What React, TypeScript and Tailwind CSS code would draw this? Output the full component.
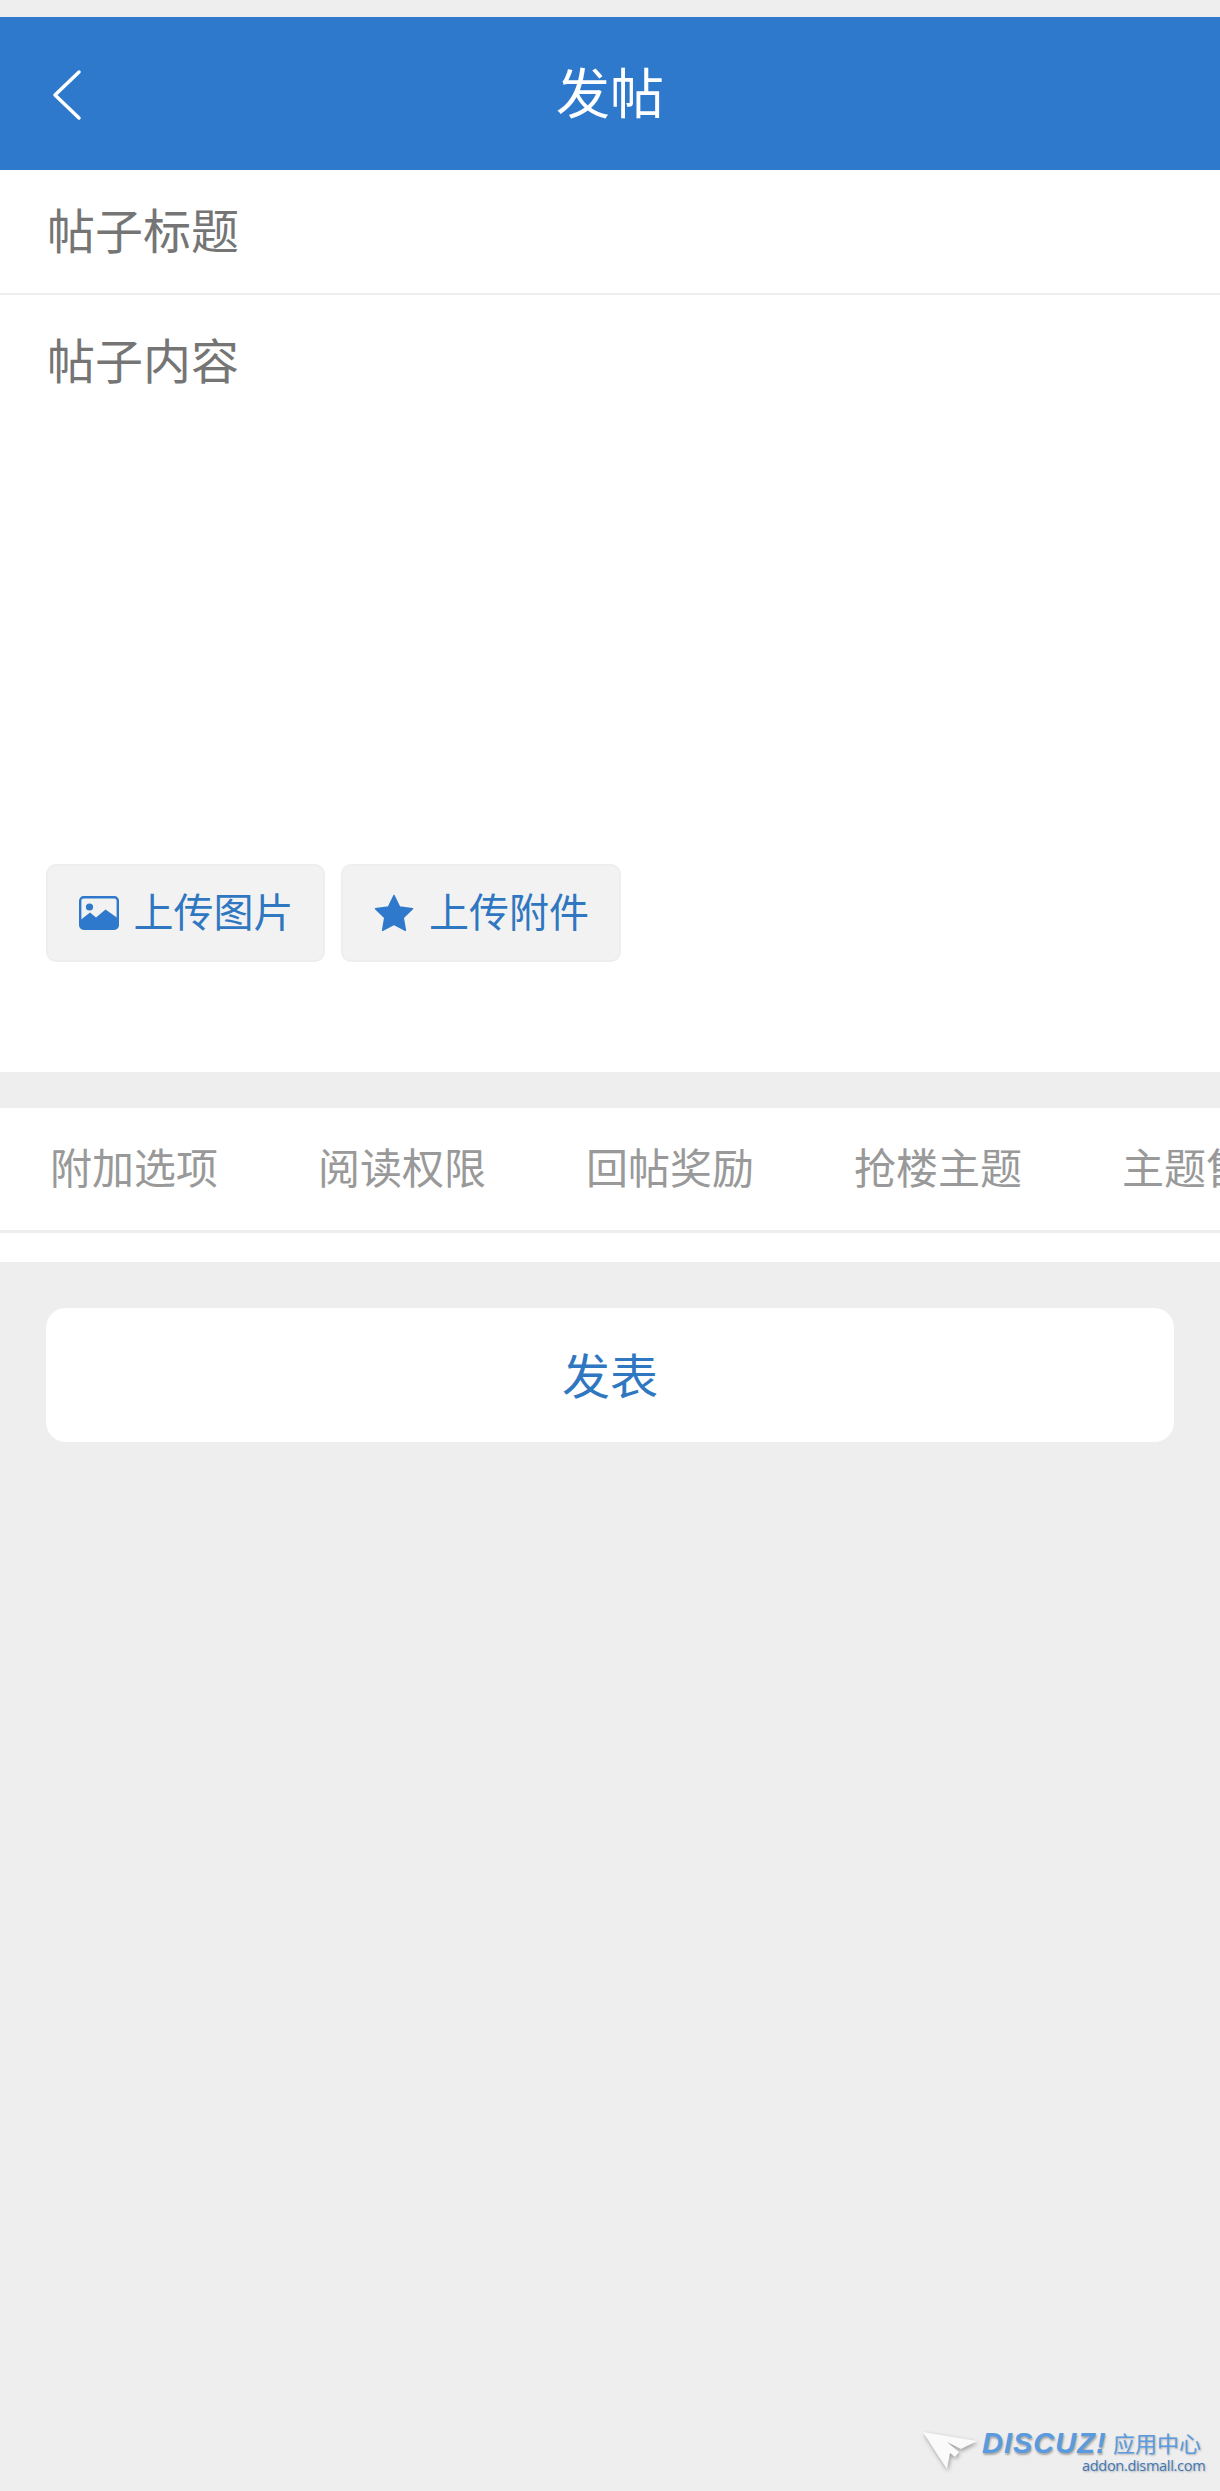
import React from "react";

const CJK = "font-['Noto_Sans_CJK_SC','Noto_Sans',sans-serif]";

const TABS = ["附加选项", "阅读权限", "回帖奖励", "抢楼主题", "主题售价"];

const ImageIcon: React.FC = () => (
  <svg width="40" height="34" viewBox="0 0 40 34" className="shrink-0">
    <rect x="1.2" y="1.2" width="37.6" height="31.6" rx="3.5" fill="none" stroke="#2e79cb" strokeWidth="2.4" />
    <circle cx="10.5" cy="11" r="3.6" fill="#2e79cb" />
    <path d="M1.5 30V24L11 16.5L17 21.5L26.5 13.5L38.5 22V30A3 3 0 0 1 35.5 33H4.5A3 3 0 0 1 1.5 30Z" fill="#2e79cb" />
  </svg>
);

const StarIcon: React.FC = () => (
  <svg width="40" height="38" viewBox="0 0 40 38" className="shrink-0">
    <path
      d="M20 1.5L25.6 13L38.5 14.8L29.2 23.7L31.4 36.3L20 30.3L8.6 36.3L10.8 23.7L1.5 14.8L14.4 13Z"
      fill="#2e79cb"
      stroke="#2e79cb"
      strokeWidth="1.5"
      strokeLinejoin="round"
    />
  </svg>
);

const UploadButton: React.FC<{ icon: React.ReactNode; label: string; width: string }> = ({ icon, label, width }) => (
  <button
    type="button"
    className={`flex h-[98px] items-center justify-center gap-[15px] rounded-[10px] border-2 border-[#eeeeee] bg-[#f2f2f2] pl-[1px] text-[40px] leading-none text-[#2f77c1] ${width}`}
  >
    {icon}
    <span className="pb-[6px]">{label}</span>
  </button>
);

export default function App() {
  return (
    <div className={`relative min-h-[2491px] overflow-hidden bg-[#eeeeee] pt-[17px] ${CJK}`}>
      <header className="relative flex h-[153px] items-center justify-center bg-[#2e79cb] pb-[6px]">
        <svg width="32" height="52" viewBox="0 0 32 52" className="absolute left-[51px] top-[52px]">
          <path d="M28 3L4 26L28 49" fill="none" stroke="#ffffff" strokeWidth="3.5" strokeLinecap="round" strokeLinejoin="round" />
        </svg>
        <h1 className="text-[54px] font-normal leading-none text-white">发帖</h1>
      </header>

      <div className="flex h-[123px] items-center bg-white pb-[8px] pl-[47px] text-[48px] leading-none text-[#757575]">帖子标题</div>

      <div className="border-t-2 border-[#eeeeee] bg-white">
        <div className="h-[569px] pl-[47px] pt-[27px] text-[48px] leading-[72px] text-[#757575]">帖子内容</div>
        <div className="flex gap-[16px] pb-[110px] pl-[46px]">
          <UploadButton icon={<ImageIcon />} label="上传图片" width="w-[279px]" />
          <UploadButton icon={<StarIcon />} label="上传附件" width="w-[280px]" />
        </div>
      </div>

      <div className="mt-[36px] bg-white">
        <div className="flex h-[122px] items-center gap-[100px] overflow-hidden whitespace-nowrap pb-[6px] pl-[50px] text-[42px] leading-none text-[#999999]">
          {TABS.map((tab) => (
            <span key={tab} className="shrink-0">
              {tab}
            </span>
          ))}
        </div>
        <div className="h-[32px] border-t-[3px] border-[#eeeeee]" />
      </div>

      <div className="px-[46px] pt-[46px]">
        <button
          type="button"
          className="flex h-[134px] w-full items-center justify-center rounded-[20px] bg-white pb-[4px] text-[48px] leading-none text-[#2f77c1]"
        >
          发表
        </button>
      </div>

      {/* watermark sits on top of the page, bottom right */}
      <div className="absolute left-[923px] top-[2432px] h-[42px] w-[285px]">
        <svg width="56" height="40" viewBox="0 0 56 40" className="absolute left-0 top-0 drop-shadow-[1px_2px_2px_rgba(0,0,0,0.35)]">
          <path d="M0 0L54 9L38 17L24 10L36 20L32 25L27 21L24 37L14 22Z" fill="#fafafa" />
        </svg>
        <span className="absolute left-[59px] top-[-2px] font-['Liberation_Sans',sans-serif] text-[29px] font-bold italic leading-[26px] tracking-[1px] text-[#5a9ade] [text-shadow:1px_2px_2px_rgba(0,0,0,0.3)]">
          DISCUZ!
        </span>
        <span className="absolute left-[190px] top-[-2px] text-[22px] leading-[24px] text-[#5a9ade] [text-shadow:1px_1px_2px_rgba(0,0,0,0.25)]">
          应用中心
        </span>
        <span className="absolute left-[159px] top-[26px] font-['Open_Sans',sans-serif] text-[14.5px] leading-[16px] tracking-[-0.3px] text-[#3f78b5] [text-shadow:1px_1px_2px_rgba(0,0,0,0.25)]">
          addon.dismall.com
        </span>
      </div>
    </div>
  );
}
